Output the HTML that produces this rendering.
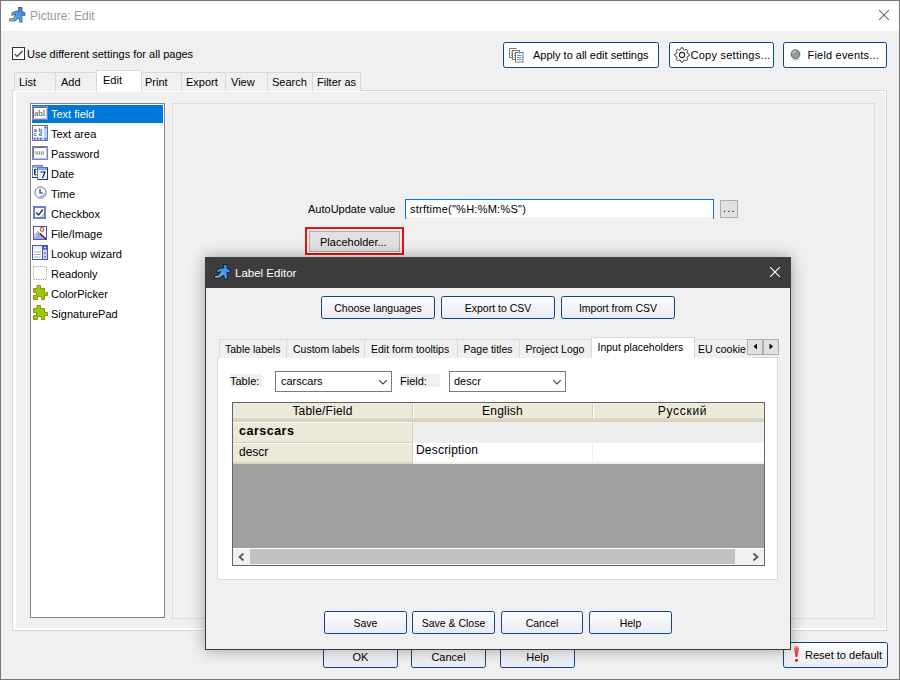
<!DOCTYPE html>
<html><head><meta charset="utf-8">
<style>
*{box-sizing:border-box;margin:0;padding:0}
html,body{width:900px;height:680px;overflow:hidden;background:#f0f0f0}
body{position:relative;font-family:"Liberation Sans",sans-serif;font-size:11px;color:#000}
.a{position:absolute}
.t{position:absolute;white-space:nowrap;line-height:14px}
#win{left:0;top:0;width:900px;height:680px;border:1px solid #767676;background:#f0f0f0}
#title{left:1px;top:1px;width:898px;height:30px;background:#fff}
.tab{position:absolute;top:72px;height:19px;border:1px solid #d9d9d9;border-bottom:none;background:#f0f0f0}
.tab span{position:absolute;top:2px;white-space:nowrap;line-height:14px}
.dt span{font-size:10.5px;top:2px}
.btn{position:absolute;border:1px solid #0f4585;border-radius:2.5px;background:linear-gradient(#fdfdfe,#e9ebf3);text-align:center;white-space:nowrap}
.db span{font-size:10.5px}
.li{position:absolute;left:51px;white-space:nowrap;line-height:14px}
.ic{position:absolute;left:32px;width:16px;height:16px}
</style></head><body>
<div id="win" class="a"></div>
<div id="title" class="a"></div>
<!-- title icon -->
<svg class="a" style="left:7px;top:4px" width="22" height="22" viewBox="0 0 22 22">
<defs><linearGradient id="rg6" x1="0" y1="1" x2="1" y2="0"><stop offset="0" stop-color="#6cc0ff"/><stop offset="1" stop-color="#2a78d8"/></linearGradient></defs>
<path d="M11.8 3.7H14.7V7.3L17.8 9.2V11.2H14.6L14.9 17.8H13L12.3 14.6L10.4 14.2L8 16.6L3 16.8V15L6.6 14.6L9.3 10.4L8 10.3L5.2 10.9V9.2L9 7.4H11.8Z" fill="url(#rg6)" stroke="rgba(20,20,30,0.75)" stroke-width="1.3" stroke-linejoin="miter" paint-order="stroke"/>
</svg>
<div class="t" style="left:30px;top:9px;color:#9a9a9a;font-size:12px">Picture: Edit</div>
<svg class="a" style="left:879px;top:10px" width="10" height="10"><path d="M0 0L10 10M10 0L0 10" stroke="#6a6a6a" stroke-width="1.1"/></svg>

<!-- checkbox -->
<div class="a" style="left:12px;top:47px;width:13px;height:13px;border:1px solid #333;background:#fff"></div>
<svg class="a" style="left:13px;top:48px" width="11" height="11"><path d="M1.5 5.8L4.2 8.5L9.5 3" stroke="#333" stroke-width="1.1" fill="none"/></svg>
<div class="t" style="left:27px;top:47px">Use different settings for all pages</div>

<!-- top buttons -->
<div class="btn" style="left:503px;top:42px;width:156px;height:26px;background:#fff"><span class="t" style="left:29px;top:5px">Apply to all edit settings</span></div>
<div class="btn" style="left:669px;top:42px;width:105px;height:26px;background:#fff"><span class="t" style="left:20.5px;top:5px;letter-spacing:0.25px">Copy settings...</span></div>
<div class="btn" style="left:783px;top:42px;width:104px;height:26px;background:#fff"><span class="t" style="left:23.5px;top:5px;letter-spacing:0.2px">Field events...</span></div>
<svg class="a" style="left:508px;top:47px" width="17" height="16" viewBox="0 0 17 16">
<path d="M8.5 1.5H1.5V10.5H4" stroke="#7a7a7a" stroke-width="1" fill="none"/>
<path d="M1.5 1.5V10.5" stroke="#7a7a7a" fill="none"/>
<path d="M3 4.5h1.5M3 6.5h1.5M3 8.5h1.5" stroke="#4a8ad8" stroke-width="0.9"/>
<rect x="4.5" y="3.5" width="7" height="9" fill="#fff" stroke="#7a7a7a"/>
<path d="M6 6.5h1.5M6 8.5h1.5M6 10.5h1.5" stroke="#4a8ad8" stroke-width="0.9"/>
<rect x="7.5" y="5.5" width="7.5" height="9.5" fill="#fff" stroke="#7a7a7a"/>
<path d="M9 8.5h4.5M9 10.5h4.5M9 12.5h4.5" stroke="#4a8ad8" stroke-width="0.9"/>
</svg>
<svg class="a" style="left:674px;top:47px" width="16" height="16" viewBox="0 0 16 16">
<path d="M7.28 0.74 L8.72 0.74 L9.63 2.64 L10.64 3.06 L12.63 2.36 L13.64 3.37 L12.94 5.36 L13.36 6.37 L15.26 7.28 L15.26 8.72 L13.36 9.63 L12.94 10.64 L13.64 12.63 L12.63 13.64 L10.64 12.94 L9.63 13.36 L8.72 15.26 L7.28 15.26 L6.37 13.36 L5.36 12.94 L3.37 13.64 L2.36 12.63 L3.06 10.64 L2.64 9.63 L0.74 8.72 L0.74 7.28 L2.64 6.37 L3.06 5.36 L2.36 3.37 L3.37 2.36 L5.36 3.06 L6.37 2.64Z" fill="none" stroke="#3a3a3a" stroke-width="1"/>
<circle cx="8" cy="8" r="2.6" fill="none" stroke="#2a2a2a" stroke-width="1.1"/>
</svg>
<svg class="a" style="left:789px;top:48px" width="14" height="14" viewBox="0 0 14 14">
<ellipse cx="7" cy="11.5" rx="4" ry="1.2" fill="#ddd"/>
<circle cx="6.5" cy="6.2" r="4.4" fill="#9a9a9a" stroke="#5a5a5a" stroke-width="0.9"/>
<path d="M4.3 5.2 A2.8 2.8 0 0 1 6.6 3" stroke="#f4f4f4" stroke-width="1" fill="none"/>
</svg>

<!-- main tabs -->
<div class="a" style="left:12px;top:90px;width:875px;height:541px;border:1px solid #d9d9d9;background:#fff"></div>
<div class="a" style="left:16px;top:92px;width:869px;height:536px;background:#f0f0f0"></div>
<div class="tab" style="left:14px;width:42px"><span style="left:4px">List</span></div>
<div class="tab" style="left:55px;width:42px"><span style="left:5px">Add</span></div>
<div class="tab" style="left:141px;width:41px"><span style="left:3px">Print</span></div>
<div class="tab" style="left:181px;width:45px"><span style="left:4px">Export</span></div>
<div class="tab" style="left:225px;width:43px"><span style="left:5px">View</span></div>
<div class="tab" style="left:267px;width:46px"><span style="left:4px">Search</span></div>
<div class="tab" style="left:312px;width:49px"><span style="left:4px">Filter as</span></div>
<div class="tab" style="left:96px;top:70px;width:46px;height:22px;background:#fff;z-index:2"><span style="left:6px;top:2px">Edit</span></div>

<!-- listbox -->
<div class="a" style="left:30px;top:103px;width:135px;height:515px;border:1px solid #828790;background:#fff"></div>
<div class="a" style="left:32px;top:105px;width:131px;height:18px;background:#0078d7"></div>

<svg class="a" style="left:32px;top:106px" width="16" height="14" viewBox="0 0 16 14">
<rect x="0.5" y="0.5" width="15" height="13" fill="#fff" stroke="#8080c8"/>
<path d="M1.5 12.5V1.5H14.5" stroke="#6a6a70" fill="none"/>
<path d="M14.5 1.5V12.5H1.5" stroke="#b0c8e8" fill="none"/>
<text x="2.2" y="10.3" font-family="Liberation Serif" font-size="9" fill="#404048">abl</text>
</svg>
<svg class="a" style="left:32px;top:125px" width="16" height="16" viewBox="0 0 16 16">
<rect x="0.5" y="0.5" width="15" height="15" fill="#fff" stroke="#6a6ab8"/>
<rect x="12" y="1" width="3" height="14" fill="#b8d0f0"/>
<rect x="1" y="12" width="11" height="3" fill="#c8d8e8"/>
<rect x="2" y="13" width="1.5" height="1.5" fill="#3050a0"/><rect x="5" y="13" width="1.5" height="1.5" fill="#3050a0"/><rect x="8" y="13" width="1.5" height="1.5" fill="#3050a0"/><rect x="12.7" y="13" width="1.5" height="1.5" fill="#3050a0"/><rect x="12.7" y="1.8" width="1.5" height="1.5" fill="#3050a0"/>
<text x="1.5" y="6.5" font-family="Liberation Sans" font-size="6" font-weight="bold" fill="#3060b0">a b</text>
<text x="1.5" y="11.3" font-family="Liberation Sans" font-size="6" font-weight="bold" fill="#3060b0">c d</text>
</svg>
<svg class="a" style="left:32px;top:146px" width="16" height="14" viewBox="0 0 16 14">
<rect x="0.5" y="0.5" width="15" height="13" fill="#fff" stroke="#8080c8"/>
<path d="M1.5 12.5V1.5H14.5" stroke="#6a6a70" fill="none"/>
<path d="M14.5 1.5V12.5H1.5" stroke="#b0c8e8" fill="none"/>
<path d="M3.5 6h9M3.5 8h9" stroke="#404050" stroke-width="1" stroke-dasharray="1 0.8"/>
<path d="M3.5 7h9" stroke="#8090a0" stroke-width="1" stroke-dasharray="0.8 1"/>
</svg>
<svg class="a" style="left:32px;top:165px" width="16" height="16" viewBox="0 0 16 16">
<rect x="0.5" y="0.5" width="10" height="12" fill="#fff" stroke="#6a7ad0"/>
<rect x="1" y="1" width="9" height="2" fill="#8ab8f0"/>
<path d="M0.5 12.5H10.5" stroke="#2a2aa0"/>
<path d="M4.5 4.5C2.5 4 1.8 5.5 3.2 7C1.8 8 2.3 10 4.5 10" stroke="#101010" stroke-width="1.2" fill="none"/>
<rect x="5.5" y="2.5" width="10" height="12" fill="#eef6ff" stroke="#5a7ad0"/>
<rect x="6" y="3" width="9" height="2.2" fill="#7ab0f0"/>
<path d="M6 14.5H15.5V2.5" stroke="#2a2aa0" fill="none"/>
<path d="M8.5 7H13L10.5 13" stroke="#101010" stroke-width="1.1" fill="none"/>
</svg>
<svg class="a" style="left:34px;top:186px" width="13" height="13" viewBox="0 0 13 13">
<circle cx="6.5" cy="6.5" r="5.6" fill="#fff" stroke="#5a6aa0" stroke-width="1"/>
<path d="M7 9.5 A5 5 0 0 0 11 5.5 L11 8 A5 5 0 0 1 5 11z" fill="#9ab8e8"/>
<path d="M6 3v4h3" stroke="#303040" stroke-width="1.2" fill="none"/>
</svg>
<svg class="a" style="left:33px;top:206px" width="13" height="13" viewBox="0 0 13 13">
<rect x="0.5" y="0.5" width="12" height="12" fill="#fff" stroke="#7a7ac8"/>
<path d="M12 6 L12 12 L6 12z" fill="#b8d0e8"/>
<rect x="1.5" y="1.5" width="10" height="10" fill="none" stroke="#3a6ab8" stroke-width="0.8"/>
<path d="M3 6.5L5.5 9L10 3.5" stroke="#303040" stroke-width="1.4" fill="none"/>
</svg>
<svg class="a" style="left:33px;top:226px" width="14" height="14" viewBox="0 0 14 14">
<rect x="0.5" y="0.5" width="13" height="13" fill="#fff" stroke="#5050b0"/>
<path d="M1 12 L5 6 L8 8 L13 12 L13 13 L1 13z" fill="#a8a8d8"/>
<path d="M1 10 L4.5 5.5 L8 8" stroke="#8080c0" fill="none" stroke-width="0.8"/>
<path d="M7 7.5L13 13" stroke="#202030" stroke-width="1.2"/>
<circle cx="9" cy="3.5" r="1.8" fill="#fff" stroke="#e06020" stroke-width="1.2"/>
</svg>
<svg class="a" style="left:32px;top:245px" width="16" height="15" viewBox="0 0 16 15">
<rect x="0.5" y="0.5" width="15" height="14" fill="#fff" stroke="#5050b0"/>
<rect x="1" y="1" width="9" height="3" fill="#e8f0f8"/>
<path d="M2 7h7M2 9.5h7M2 12h7" stroke="#a0a0b0" stroke-width="0.9"/>
<rect x="10.5" y="0.5" width="5" height="14" fill="#c8d8f0" stroke="#5050b0"/>
<rect x="10.5" y="0.5" width="5" height="4" fill="#4060b8"/>
<path d="M11.8 2h2.4L13 3.3z" fill="#fff"/>
<path d="M11.8 8.5h2.4L13 7.2z" fill="#203080"/>
<path d="M11.8 11.5h2.4L13 12.8z" fill="#203080"/>
</svg>
<svg class="a" style="left:33px;top:266px" width="14" height="14" viewBox="0 0 14 14">
<rect x="0.5" y="0.5" width="13" height="13" fill="none" stroke="#909090" stroke-dasharray="1 1.2"/>
</svg>
<svg class="a" style="left:33px;top:285px" width="15" height="16" viewBox="0 0 15 16">
<path d="M4 0.5H7.5V3.5H11.5V7.5H14.5V10.5H11.5V14.5H8.5V11.5H4.5V14.5H0.5V10.5H3.5V7.5H0.5V3.5H4Z" fill="#96cc00" stroke="#9a8a18" stroke-width="1"/>
</svg>
<svg class="a" style="left:33px;top:305px" width="15" height="16" viewBox="0 0 15 16">
<path d="M4 0.5H7.5V3.5H11.5V7.5H14.5V10.5H11.5V14.5H8.5V11.5H4.5V14.5H0.5V10.5H3.5V7.5H0.5V3.5H4Z" fill="#96cc00" stroke="#9a8a18" stroke-width="1"/>
</svg>
<div class="li" style="top:107px;color:#fff">Text field</div>
<div class="li" style="top:127px">Text area</div>
<div class="li" style="top:147px">Password</div>
<div class="li" style="top:167px">Date</div>
<div class="li" style="top:187px">Time</div>
<div class="li" style="top:207px">Checkbox</div>
<div class="li" style="top:227px">File/Image</div>
<div class="li" style="top:247px">Lookup wizard</div>
<div class="li" style="top:267px">Readonly</div>
<div class="li" style="top:287px">ColorPicker</div>
<div class="li" style="top:307px">SignaturePad</div>

<!-- right group -->
<div class="a" style="left:172px;top:103px;width:703px;height:516px;border:1px solid #dcdcdc"></div>
<div class="t" style="left:308px;top:202px">AutoUpdate value</div>
<div class="a" style="left:405px;top:199px;width:309px;height:20px;border:1px solid #0078d7;border-bottom:none;background:linear-gradient(#fff 17px,#f0f0f0 17px)"></div>
<div class="t" style="left:410px;top:202px;letter-spacing:0.25px">strftime("%H:%M:%S")</div>
<div class="a" style="left:720px;top:200px;width:18px;height:18px;border:1px solid #adadad;background:#e1e1e1"></div>
<div class="t" style="left:723px;top:201px;letter-spacing:1.2px">...</div>
<div class="a" style="left:305px;top:227px;width:99px;height:28px;border:2px solid #ee0f0f"></div>
<div class="a" style="left:309px;top:231px;width:91px;height:21px;border:1px solid #adadad;background:#e1e1e1"></div>
<div class="t" style="left:320px;top:235px">Placeholder...</div>

<!-- main bottom buttons -->
<div class="btn" style="left:323px;top:642px;width:75px;height:26px"><span class="t" style="left:0;right:0;top:7px">OK</span></div>
<div class="btn" style="left:411px;top:642px;width:75px;height:26px"><span class="t" style="left:0;right:0;top:7px">Cancel</span></div>
<div class="btn" style="left:500px;top:642px;width:75px;height:26px"><span class="t" style="left:0;right:0;top:7px">Help</span></div>
<div class="btn" style="left:783px;top:642px;width:105px;height:26px"><span class="t" style="left:21px;top:5px">Reset to default</span></div>
<svg class="a" style="left:793px;top:646px" width="7" height="17" viewBox="0 0 7 17"><defs><linearGradient id="exg" x1="0" y1="0" x2="0" y2="1"><stop offset="0" stop-color="#f08080"/><stop offset="1" stop-color="#e81818"/></linearGradient></defs><path d="M1 2.5 A2.5 2.5 0 0 1 6 2.5 L4.3 11 L2.7 11z" fill="url(#exg)"/><path d="M2 2.5 A1.5 1.5 0 0 1 4 1.5" stroke="#ffb0b0" fill="none" stroke-width="0.8"/><circle cx="3.5" cy="14.3" r="1.6" fill="#e02020"/></svg>

<!-- DIALOG -->
<div id="dlg" class="a" style="left:205px;top:257px;width:586px;height:393px;background:#f0f0f0;border:1px solid #3a3a3a;box-shadow:0 0 14px rgba(0,0,0,0.35)">
</div>

<div class="a" style="left:205px;top:257px;width:586px;height:31px;background:#3c3c3c"></div>
<svg class="a" style="left:212px;top:261px" width="22" height="22" viewBox="0 0 22 22">
<defs><linearGradient id="rg212" x1="0" y1="1" x2="1" y2="0"><stop offset="0" stop-color="#6cc0ff"/><stop offset="1" stop-color="#2a78d8"/></linearGradient></defs>
<path d="M11.8 3.7H14.7V7.3L17.8 9.2V11.2H14.6L14.9 17.8H13L12.3 14.6L10.4 14.2L8 16.6L3 16.8V15L6.6 14.6L9.3 10.4L8 10.3L5.2 10.9V9.2L9 7.4H11.8Z" fill="url(#rg212)" stroke="rgba(0,0,0,0.8)" stroke-width="1.3" stroke-linejoin="miter" paint-order="stroke"/>
</svg>
<div class="t" style="left:235px;top:266px;color:#fff;font-size:11.5px">Label Editor</div>
<svg class="a" style="left:770px;top:267px" width="10" height="10"><path d="M0 0L10 10M10 0L0 10" stroke="#fff" stroke-width="1.1"/></svg>

<div class="btn db" style="left:321px;top:296px;width:114px;height:23px"><span class="t" style="left:0;right:0;top:4px">Choose languages</span></div>
<div class="btn db" style="left:441px;top:296px;width:114px;height:23px"><span class="t" style="left:0;right:0;top:4px">Export to CSV</span></div>
<div class="btn db" style="left:561px;top:296px;width:114px;height:23px"><span class="t" style="left:0;right:0;top:4px">Import from CSV</span></div>

<div class="a" style="left:217px;top:357px;width:561px;height:223px;border:1px solid #d9d9d9;background:#fff"></div>
<div class="tab dt" style="left:219px;top:339px;width:68px;height:19px"><span style="left:5px">Table labels</span></div>
<div class="tab dt" style="left:286px;top:339px;width:79px;height:19px"><span style="left:6px">Custom labels</span></div>
<div class="tab dt" style="left:364px;top:339px;width:94px;height:19px"><span style="left:6px">Edit form tooltips</span></div>
<div class="tab dt" style="left:457px;top:339px;width:63px;height:19px"><span style="left:5.5px">Page titles</span></div>
<div class="tab dt" style="left:519px;top:339px;width:73px;height:19px"><span style="left:5.5px">Project Logo</span></div>
<div class="tab dt" style="left:694px;top:339px;width:60px;height:19px;overflow:hidden"><span style="left:3px">EU cookie</span></div>
<div class="tab dt" style="left:591px;top:337px;width:104px;height:21px;background:#fff"><span style="left:5.5px;top:2px">Input placeholders</span></div>
<div class="a" style="left:747px;top:339px;width:16px;height:16px;border:1px solid #adadad;background:#e1e1e1"></div>
<div class="a" style="left:763px;top:339px;width:16px;height:16px;border:1px solid #adadad;background:#e1e1e1"></div>
<svg class="a" style="left:753px;top:343px" width="5" height="7"><path d="M4 0.5L0.5 3.5L4 6.5z" fill="#000"/></svg>
<svg class="a" style="left:769px;top:343px" width="5" height="7"><path d="M0.5 0.5L4 3.5L0.5 6.5z" fill="#000"/></svg>

<div class="a" style="left:230px;top:374px;width:32px;height:13px;background:#f0f0f0"></div>
<div class="t" style="left:230px;top:374px">Table:</div>
<div class="a" style="left:275px;top:371px;width:117px;height:21px;border:1px solid #7a7a7a;background:#fff"></div>
<div class="t" style="left:281px;top:374px">carscars</div>
<svg class="a" style="left:378px;top:378px" width="10" height="8"><path d="M1.2 2.2L5 6L8.8 2.2" stroke="#444" stroke-width="1.15" fill="none"/></svg>
<div class="a" style="left:401px;top:374px;width:39px;height:13px;background:#f0f0f0"></div>
<div class="t" style="left:400px;top:374px">Field:</div>
<div class="a" style="left:449px;top:371px;width:117px;height:21px;border:1px solid #7a7a7a;background:#fff"></div>
<div class="t" style="left:454px;top:374px">descr</div>
<svg class="a" style="left:552px;top:378px" width="10" height="8"><path d="M1.2 2.2L5 6L8.8 2.2" stroke="#444" stroke-width="1.15" fill="none"/></svg>

<div class="a" style="left:232px;top:402px;width:533px;height:164px;border:1px solid #646464;background:#a0a0a0"></div>
<div class="a" style="left:233px;top:403px;width:531px;height:19px;background:linear-gradient(#ece9d8 15px,#dedac8 15px,#d4d0bc 19px)"></div>
<div class="a" style="left:412px;top:403px;width:2px;height:16px;background:linear-gradient(90deg,#d2cebb 50%,#fff 50%)"></div>
<div class="a" style="left:592px;top:403px;width:2px;height:16px;background:linear-gradient(90deg,#d2cebb 50%,#fff 50%)"></div>
<div class="t" style="left:233px;width:179px;text-align:center;top:404px;font-size:12px;letter-spacing:0.2px">Table/Field</div>
<div class="t" style="left:413px;width:179px;text-align:center;top:404px;font-size:12px;letter-spacing:0.2px">English</div>
<div class="t" style="left:597px;width:171px;text-align:center;top:404px;font-size:12px;letter-spacing:0.7px">Русский</div>
<div class="a" style="left:233px;top:422px;width:179px;height:42px;background:#ece9d8"></div>
<div class="a" style="left:233px;top:422px;width:179px;height:1px;background:#fbfaf4"></div>
<div class="a" style="left:233px;top:442px;width:179px;height:1px;background:#d4d0bc"></div>
<div class="a" style="left:233px;top:443px;width:179px;height:1px;background:#fbfaf4"></div>
<div class="a" style="left:233px;top:462px;width:179px;height:2px;background:#d8d4c0"></div>
<div class="a" style="left:412px;top:422px;width:1px;height:42px;background:#d4d0bc"></div>
<div class="a" style="left:413px;top:422px;width:351px;height:20px;background:#efefef"></div>
<div class="a" style="left:413px;top:442px;width:351px;height:1px;background:#f2f0e4"></div>
<div class="a" style="left:413px;top:443px;width:351px;height:19px;background:#fff"></div>
<div class="a" style="left:413px;top:462px;width:351px;height:2px;background:#f2f0e4"></div>
<div class="a" style="left:592px;top:422px;width:1px;height:41px;background:#f2f0e4"></div>
<div class="t" style="left:239px;top:424px;font-weight:bold;font-size:12.5px;letter-spacing:0.5px">carscars</div>
<div class="t" style="left:239px;top:445px;font-size:12px">descr</div>
<div class="t" style="left:416px;top:443px;font-size:12px;letter-spacing:0.2px">Description</div>
<div class="a" style="left:233px;top:548px;width:531px;height:17px;background:#f0f0f0;border-top:1px solid #fff"></div>
<div class="a" style="left:250px;top:549px;width:485px;height:15px;background:#c2c2c2"></div>
<svg class="a" style="left:238px;top:553px" width="7" height="8"><path d="M5.5 0.5L1.5 4L5.5 7.5" stroke="#555" stroke-width="1.8" fill="none"/></svg>
<svg class="a" style="left:752px;top:553px" width="7" height="8"><path d="M1.5 0.5L5.5 4L1.5 7.5" stroke="#555" stroke-width="1.8" fill="none"/></svg>

<div class="btn db" style="left:324px;top:611px;width:83px;height:23px"><span class="t" style="left:0;right:0;top:4px">Save</span></div>
<div class="btn db" style="left:412px;top:611px;width:83px;height:23px"><span class="t" style="left:0;right:0;top:4px">Save &amp; Close</span></div>
<div class="btn db" style="left:501px;top:611px;width:82px;height:23px"><span class="t" style="left:0;right:0;top:4px">Cancel</span></div>
<div class="btn db" style="left:589px;top:611px;width:83px;height:23px"><span class="t" style="left:0;right:0;top:4px">Help</span></div>
</body></html>
